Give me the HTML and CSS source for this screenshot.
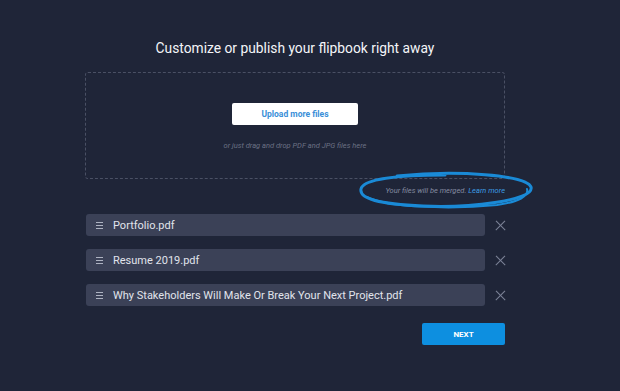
FILE: index.html
```html
<!DOCTYPE html>
<html>
<head>
  <title>Flipbook | Upload</title>
  <meta charset="UTF-8">
  <link rel="stylesheet" href="styles.css">
</head>
<body>
  <div class="container">
    <h1 class="title">Customize or publish your flipbook right away</h1>
    <div class="dropzone">
      <button type="button" class="upload-btn">Upload more files</button>
      <p class="drop-hint">or just drag and drop PDF and JPG files here</p>
    </div>
    <div class="note-row">
      <div class="note">
        Your files will be merged. <a href="#">Learn more</a>
        <svg class="scribble" width="178" height="40" viewBox="0 0 178 40">
          <path d="M40 5 C100 -1 170 4 174 16 C178 30 110 37 66 35 C22 33 2 28 4 18 C6 8 40 4 88 4" fill="none" stroke="#1a8ad6" stroke-width="3" stroke-linecap="round"/>
          <path d="M10 26 C30 36 90 39 140 34 C162 31 172 25 170 18" fill="none" stroke="#1a8ad6" stroke-width="2" stroke-linecap="round"/>
        </svg>
      </div>
    </div>
    <ul class="files">
      <li class="file"><div class="file-name"><span class="grip"></span>Portfolio.pdf</div><span class="remove"></span></li>
      <li class="file"><div class="file-name"><span class="grip"></span>Resume 2019.pdf</div><span class="remove"></span></li>
      <li class="file"><div class="file-name"><span class="grip"></span>Why Stakeholders Will Make Or Break Your Next Project.pdf</div><span class="remove"></span></li>
    </ul>
    <div class="actions">
      <button type="button" class="next-btn">NEXT</button>
    </div>
  </div>
</body>
</html>
```

FILE: styles.css
```css
body {
  font-family: Roboto, 'Liberation Sans', sans-serif;
  margin: 0;
  padding: 0;
  background-color: #1f2538;
  height: 391px;
  overflow: hidden;
}
.container {
  width: 420px;
  margin-left: 85px;
  padding-top: 39px;
}
.title {
  margin: 0;
  font-size: 13.8px;
  font-weight: 400;
  line-height: 18px;
  color: #f4f5f8;
  text-align: center;
}
.dropzone {
  margin-top: 15px;
  border: 1px dashed #4a5064;
  border-radius: 3px;
  display: flex;
  flex-direction: column;
  align-items: center;
  padding-top: 30px;
  box-sizing: border-box;
  height: 107px;
}
.upload-btn {
  width: 126px;
  height: 22px;
  border: none;
  border-radius: 2px;
  background-color: #ffffff;
  color: #3a8fd8;
  font-family: Roboto, 'Liberation Sans', sans-serif;
  font-size: 8.5px;
  font-weight: 700;
  cursor: pointer;
}
.drop-hint {
  margin: 16px 0 0;
  font-size: 7.5px;
  font-style: italic;
  color: #6b7184;
}
.note-row {
  display: flex;
  justify-content: flex-end;
  margin-top: 6px;
}
.note {
  position: relative;
  font-size: 7.5px;
  font-style: italic;
  color: #858ba0;
  line-height: 10px;
  padding: 1px 0;
}
.note a {
  color: #3c9be2;
  text-decoration: none;
}
.scribble {
  position: absolute;
  left: -28px;
  top: -14px;
}
.files {
  list-style: none;
  margin: 17px 0 0;
  padding: 0;
}
.file {
  display: flex;
  align-items: center;
  margin-bottom: 13px;
}
.file-name {
  width: 400px;
  height: 22px;
  margin-left: 1px;
  background-color: #3b4157;
  border-radius: 3px;
  display: flex;
  align-items: center;
  font-size: 11px;
  color: #e1e4ec;
}
.grip {
  width: 7px;
  height: 7px;
  margin: 0 10px 0 10px;
  background: linear-gradient(#aeb3c2, #aeb3c2) 0 0 / 7px 1px no-repeat,
              linear-gradient(#aeb3c2, #aeb3c2) 0 3px / 7px 1px no-repeat,
              linear-gradient(#aeb3c2, #aeb3c2) 0 6px / 7px 1px no-repeat;
}
.remove {
  position: relative;
  width: 10px;
  height: 10px;
  margin-left: 10px;
}
.remove::before,
.remove::after {
  content: "";
  position: absolute;
  left: -1px;
  top: 4.5px;
  width: 13px;
  height: 1.3px;
  background-color: #7d8397;
  transform: rotate(45deg);
}
.remove::after {
  transform: rotate(-45deg);
}
.actions {
  display: flex;
  justify-content: flex-end;
  margin-top: 17px;
}
.next-btn {
  width: 83px;
  height: 22px;
  border: none;
  border-radius: 2px;
  background-color: #0d8fe0;
  color: #ffffff;
  font-family: Roboto, 'Liberation Sans', sans-serif;
  font-size: 8px;
  font-weight: 700;
  cursor: pointer;
}
```
